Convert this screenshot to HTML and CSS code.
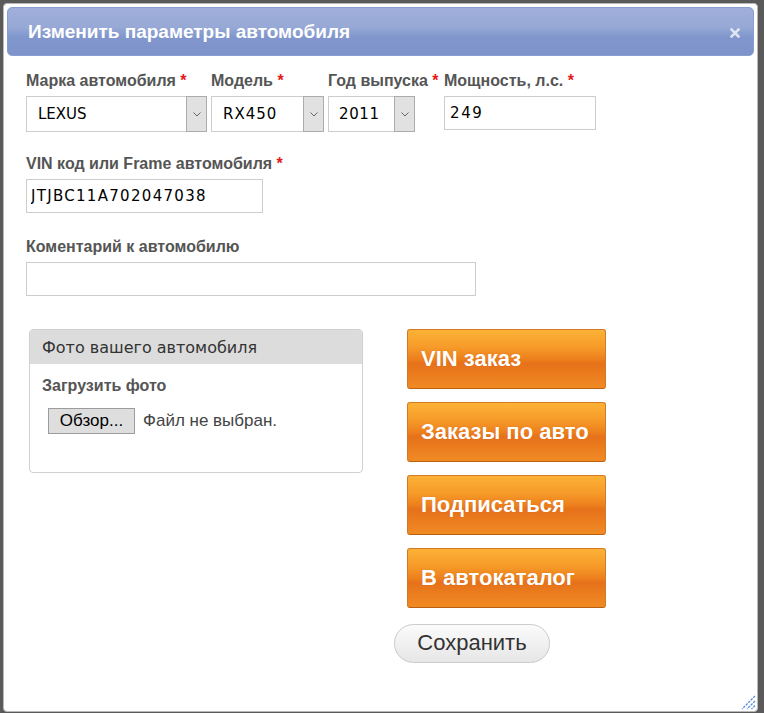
FILE: index.html
```html
<!DOCTYPE html>
<html lang="ru">
<head>
  <meta charset="UTF-8">
  <meta name="viewport" content="width=device-width, initial-scale=1.0">
  <title>Изменить параметры автомобиля</title>
  <link rel="stylesheet" href="styles.css">
</head>
<body>
  <div class="dialog">
    <div class="titlebar">
      <span class="title">Изменить параметры автомобиля</span>
      <span class="close">
        <svg width="10" height="10" viewBox="0 0 10 10"><path d="M1.5 1.5 L8.5 8.5 M8.5 1.5 L1.5 8.5" stroke="#dfe4f1" stroke-width="2.6" stroke-linecap="square"/></svg>
      </span>
    </div>

    <div class="content">
      <!-- марка / модель / год / мощность -->
      <div class="row row-main">
        <div class="field f-brand">
          <label>Марка автомобиля <span class="req">*</span></label>
          <div class="select-wrap">
            <select><option>LEXUS</option></select>
            <span class="arrow"><svg width="8" height="5" viewBox="0 0 8 5"><path d="M0.5 0.5 L4 4 L7.5 0.5" fill="none" stroke="#666" stroke-width="1"/></svg></span>
          </div>
        </div>
        <div class="field f-model">
          <label>Модель <span class="req">*</span></label>
          <div class="select-wrap">
            <select><option>RX450</option></select>
            <span class="arrow"><svg width="8" height="5" viewBox="0 0 8 5"><path d="M0.5 0.5 L4 4 L7.5 0.5" fill="none" stroke="#666" stroke-width="1"/></svg></span>
          </div>
        </div>
        <div class="field f-year">
          <label>Год выпуска <span class="req">*</span></label>
          <div class="select-wrap">
            <select><option>2011</option></select>
            <span class="arrow"><svg width="8" height="5" viewBox="0 0 8 5"><path d="M0.5 0.5 L4 4 L7.5 0.5" fill="none" stroke="#666" stroke-width="1"/></svg></span>
          </div>
        </div>
        <div class="field f-power">
          <label>Мощность, л.с. <span class="req">*</span></label>
          <input type="text" class="text-input power" value="249">
        </div>
      </div>

      <div class="field f-vin">
        <label>VIN код или Frame автомобиля <span class="req">*</span></label>
        <input type="text" class="text-input vin" value="JTJBC11A702047038">
      </div>

      <div class="field f-comment">
        <label>Коментарий к автомобилю</label>
        <input type="text" class="text-input comment" value="">
      </div>

      <div class="bottom">
        <div class="photo-box">
          <div class="photo-head">Фото вашего автомобиля</div>
          <div class="photo-body">
            <label>Загрузить фото</label>
            <div class="file-row">
              <button class="file-btn">Обзор...</button>
              <span class="file-name">Файл не выбран.</span>
            </div>
          </div>
        </div>

        <div class="actions">
          <a class="orange-btn" href="#">VIN заказ</a>
          <a class="orange-btn" href="#">Заказы по авто</a>
          <a class="orange-btn" href="#">Подписаться</a>
          <a class="orange-btn" href="#">В автокаталог</a>
          <button class="save-btn">Сохранить</button>
        </div>
      </div>
    </div>

    <span class="resize">
      <svg width="16" height="16" viewBox="0 0 16 16">
        <path d="M15 2 L2 15 M15 7 L7 15 M15 11.5 L11.5 15" stroke="#5a8fd8" stroke-width="1.3" stroke-dasharray="2.5 1"/>
      </svg>
    </span>
  </div>
</body>
</html>
```

FILE: styles.css
```css
body {
  margin: 0;
  padding: 3px 0 0 3px;
  background: #5a5a5a;
  font-family: "Liberation Sans", Arial, sans-serif;
  overflow: hidden;
}

.dialog {
  position: relative;
  box-sizing: border-box;
  width: 755px;
  height: 709px;
  padding: 3px;
  background: #fff;
  border: 1px solid #b9b9b9;
  border-radius: 4px;
}

/* заголовок окна */
.titlebar {
  display: flex;
  align-items: center;
  justify-content: space-between;
  box-sizing: border-box;
  height: 49px;
  padding: 0 13px 0 20px;
  border: 1px solid #8a9dd0;
  border-radius: 5px;
  background: linear-gradient(#a0afda 0%, #98a9d6 40%, #8a9fd1 52%, #8096cc 62%, #7d93ca 100%);
}

.title {
  color: #fff;
  font-size: 19px;
  font-weight: bold;
  padding-top: 1px;
}

.close {
  display: flex;
  padding-top: 2px;
}

.content {
  padding: 15px 0 0 19px;
}

label {
  display: block;
  height: 20px;
  line-height: 20px;
  margin-bottom: 5px;
  color: #555;
  font-size: 16px;
  font-weight: bold;
  white-space: nowrap;
}

.req {
  color: #e4191b;
}

.row-main {
  display: flex;
  margin-bottom: 22px;
}

.f-brand { width: 185px; }
.f-model { width: 117px; }
.f-year { width: 116px; }
.f-power { width: 160px; }

.select-wrap {
  position: relative;
  box-sizing: border-box;
  height: 36px;
  border: 1px solid #cdcdcd;
  background: #fff;
}

.f-brand .select-wrap { width: 181px; }
.f-model .select-wrap { width: 113px; }
.f-year .select-wrap { width: 87px; }

.select-wrap select {
  appearance: none;
  -webkit-appearance: none;
  width: 100%;
  height: 100%;
  margin: 0;
  padding: 0 0 0 11px;
  border: 0;
  background: transparent;
  font-family: "DejaVu Sans", Verdana, sans-serif;
  font-size: 15px;
  color: #000;
  outline: none;
}

.f-model select { letter-spacing: 1px; }
.f-year select { letter-spacing: 0.6px; padding-left: 10px; }

/* кнопка раскрытия списка */
.select-wrap .arrow {
  position: absolute;
  top: -1px;
  right: -1px;
  bottom: -1px;
  width: 19px;
  display: flex;
  align-items: center;
  justify-content: center;
  background: #e1e1e1;
  border: 1px solid #acacac;
}

.text-input {
  display: block;
  box-sizing: border-box;
  height: 34px;
  margin: 0;
  padding: 0 5px;
  border: 1px solid #cdcdcd;
  font-family: "DejaVu Sans", Verdana, sans-serif;
  font-size: 15px;
  color: #000;
  outline: none;
}

.power { width: 152px; letter-spacing: 1.6px; }
.vin { width: 237px; padding-left: 4px; letter-spacing: 1.3px; }
.comment { width: 450px; }

.f-vin { margin-bottom: 24px; }

.bottom {
  display: flex;
  margin-top: 33px;
}

.photo-box {
  box-sizing: border-box;
  width: 334px;
  height: 144px;
  margin: 0 0 0 3px;
  border: 1px solid #d0d0d0;
  border-radius: 4px;
  overflow: hidden;
}

.photo-head {
  height: 34px;
  line-height: 35px;
  padding-left: 12px;
  background: #dcdcdc;
  color: #333;
  font-family: "DejaVu Sans", Verdana, sans-serif;
  font-size: 16px;
}

.photo-body {
  padding: 12px 12px 0;
}

.photo-body label {
  margin-bottom: 12px;
}

.file-row {
  display: flex;
  align-items: center;
  padding-left: 6px;
}

.file-btn {
  box-sizing: border-box;
  width: 87px;
  height: 26px;
  margin: 0 8px 0 0;
  padding: 0;
  border: 1px solid #9c9c9c;
  background: #dedede;
  color: #000;
  font-family: "Liberation Sans", Arial, sans-serif;
  font-size: 17px;
}

.file-name {
  color: #444;
  font-size: 17px;
}

.actions {
  display: flex;
  flex-direction: column;
  align-items: flex-start;
  margin-left: 32px;
}

.orange-btn {
  box-sizing: border-box;
  display: flex;
  align-items: center;
  width: 199px;
  height: 60px;
  margin: 0 0 13px 12px;
  padding: 0 0 1px 13px;
  border: 1px solid #d47a26;
  border-bottom-color: #b9600f;
  border-radius: 3px;
  background: linear-gradient(#fcb236 0%, #f69a29 30%, #ed801d 50%, #e6711a 58%, #ec7f1f 80%, #f08a24 100%);
  color: #fff;
  font-size: 22px;
  font-weight: bold;
  text-decoration: none;
  text-shadow: 0 0 1px rgba(160, 70, 0, 0.35);
}

.orange-btn:hover {
  background: #f08a24;
}

.save-btn {
  box-sizing: border-box;
  width: 156px;
  height: 39px;
  margin: 3px 0 0 -1px;
  padding: 0 0 1px;
  border: 1px solid #cbcbcb;
  border-radius: 20px;
  background: linear-gradient(#fbfbfb, #e6e6e6);
  color: #333;
  font-family: "Liberation Sans", Arial, sans-serif;
  font-size: 22px;
}

/* уголок изменения размера */
.resize {
  position: absolute;
  right: 1px;
  bottom: 1px;
  display: flex;
}
```
